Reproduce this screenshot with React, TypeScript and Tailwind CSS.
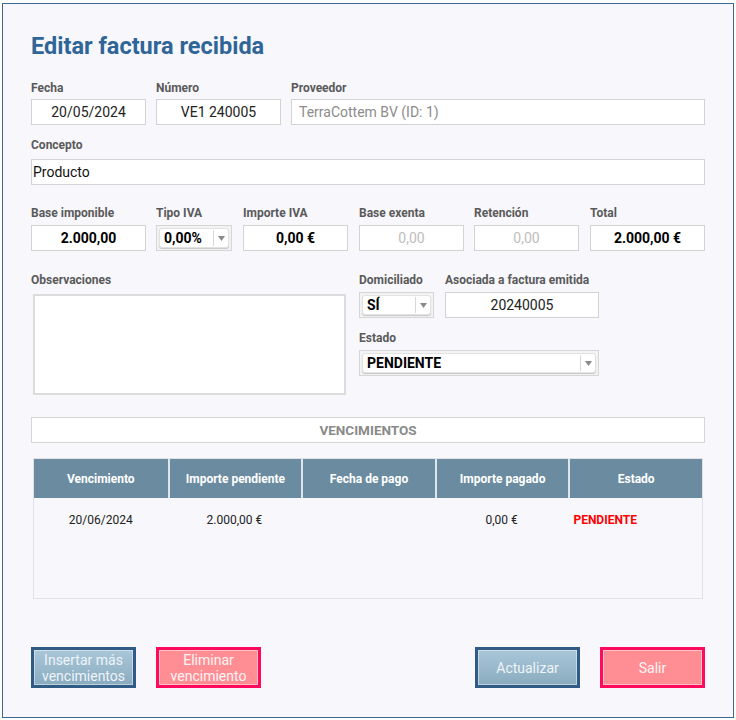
import React from "react";

const font = { fontFamily: "Roboto, 'Liberation Sans', sans-serif" };

const Label = ({ children, className = "" }: { children: React.ReactNode; className?: string }) => (
  <div className={`text-[12px] leading-[16px] font-bold text-[#5a5a5a] ${className}`}>{children}</div>
);

const Field = ({
  value,
  className = "",
  textClass = "text-center text-[#222]",
}: {
  value: string;
  className?: string;
  textClass?: string;
}) => (
  <div
    className={`h-[26px] border border-[#d3d3d3] bg-white flex items-center text-[14px] ${textClass} ${className}`}
  >
    <span className="w-full px-[7px]">{value}</span>
  </div>
);

const Select = ({ value, className = "" }: { value: string; className?: string }) => (
  <div className={`h-[26px] border border-[#d6d6d6] bg-[#f3f3f3] p-[2px] ${className}`}>
    <div className="h-full rounded-[3px] bg-white border border-[#e2e2e2] shadow-[0_1px_1px_rgba(0,0,0,0.18)] flex items-center">
      <span className="flex-1 pl-[4px] text-[14px] font-bold text-black">{value}</span>
      <div className="w-[15px] h-[16px] border-l border-[#d8d8d8] flex items-center justify-center">
        <svg width="7" height="5" viewBox="0 0 7 5">
          <path d="M0 0h7L3.5 5z" fill="#8a8a8a" />
        </svg>
      </div>
    </div>
  </div>
);

const Btn = ({ children, kind }: { children: React.ReactNode; kind: "blue" | "pink" }) =>
  kind === "blue" ? (
    <button className="w-[105px] h-[41px] border-[3px] border-[#2f5b85] bg-gradient-to-b from-[#a9c7d9] to-[#8aabbf] shadow-[inset_0_0_0_1px_rgba(255,255,255,0.45)] text-[14px] leading-[16px] text-[#eef4f8]">
      {children}
    </button>
  ) : (
    <button className="w-[105px] h-[41px] border-[3px] border-[#ff0a5c] bg-[#ff8e94] shadow-[inset_0_0_0_1px_rgba(255,255,255,0.45)] text-[14px] leading-[16px] text-[#fff4f4]">
      {children}
    </button>
  );

const cols = ["Vencimiento", "Importe pendiente", "Fecha de pago", "Importe pagado", "Estado"];

export default function App() {
  return (
    <div className="w-[736px] h-[720px] bg-white overflow-hidden" style={font}>
      <div className="ml-[2px] mt-[3px] w-[732px] h-[715px] border border-[#3c6892] bg-[#f7f7fc] pl-[28px] pr-[28px] pt-[28px]">
        <h1 className="text-[23.5px] leading-[28px] font-bold text-[#2f6597]">Editar factura recibida</h1>

        <div className="flex gap-[10px] mt-[20px]">
          <div className="w-[115px]">
            <Label className="mb-[3px]">Fecha</Label>
            <Field value="20/05/2024" />
          </div>
          <div className="w-[125px]">
            <Label className="mb-[3px]">Número</Label>
            <Field value="VE1 240005" />
          </div>
          <div className="flex-1">
            <Label className="mb-[3px]">Proveedor</Label>
            <Field value="TerraCottem BV (ID: 1)" textClass="text-left text-[#8c8c8c]" />
          </div>
        </div>

        <Label className="mt-[12px] mb-[6px]">Concepto</Label>
        <div className="h-[26px] border border-[#d3d3d3] bg-white flex items-center text-[14px] text-[#111] pl-[1px]">
          Producto
        </div>

        <div className="flex mt-[20px]">
          <div className="w-[115px]">
            <Label className="mb-[4px]">Base imponible</Label>
            <Field value="2.000,00" textClass="text-center font-bold text-black" />
          </div>
          <div className="w-[76px] ml-[10px]">
            <Label className="mb-[4px]">Tipo IVA</Label>
            <Select value="0,00%" />
          </div>
          <div className="w-[105px] ml-[11px]">
            <Label className="mb-[4px]">Importe IVA</Label>
            <Field value="0,00 €" textClass="text-center font-bold text-black" />
          </div>
          <div className="w-[105px] ml-[11px]">
            <Label className="mb-[4px]">Base exenta</Label>
            <Field value="0,00" textClass="text-center text-[#bdbdbd]" />
          </div>
          <div className="w-[105px] ml-[10px]">
            <Label className="mb-[4px]">Retención</Label>
            <Field value="0,00" textClass="text-center text-[#bdbdbd]" />
          </div>
          <div className="w-[115px] ml-[11px]">
            <Label className="mb-[4px]">Total</Label>
            <Field value="2.000,00 €" textClass="text-center font-bold text-black" />
          </div>
        </div>

        <div className="flex mt-[21px]">
          <div className="w-[315px]">
            <Label className="mb-[6px]">Observaciones</Label>
            <div className="ml-[2px] w-[313px] h-[101px] border-2 border-[#dcdcdc] bg-white" />
          </div>
          <div className="ml-[13px]">
            <div className="flex gap-[11px]">
              <div className="w-[75px]">
                <Label className="mb-[4px]">Domiciliado</Label>
                <Select value="SÍ" />
              </div>
              <div className="w-[154px]">
                <Label className="mb-[4px]">Asociada a factura emitida</Label>
                <Field value="20240005" />
              </div>
            </div>
            <Label className="mt-[12px] mb-[4px]">Estado</Label>
            <Select value="PENDIENTE" className="w-[240px]" />
          </div>
        </div>

        <div className="mt-[22px] h-[26px] border border-[#d6d6d6] bg-white flex items-center justify-center text-[13.5px] font-bold text-[#8a8a8a]">
          VENCIMIENTOS
        </div>

        <div className="mt-[15px] mx-[2px] h-[141px] border border-[#e2e2e6]">
          <div className="grid grid-cols-5 h-[39px] bg-[#6b8ca0]">
            {cols.map((c, i) => (
              <div
                key={c}
                className={`flex items-center justify-center text-[12px] font-bold text-white ${
                  i > 0 ? "border-l-2 border-[#dfe6eb]" : ""
                }`}
              >
                {c}
              </div>
            ))}
          </div>
          <div className="grid grid-cols-5 h-[44px] items-center text-[12px] text-[#222]">
            <div className="text-center">20/06/2024</div>
            <div className="text-center">2.000,00 €</div>
            <div />
            <div className="text-center">0,00 €</div>
            <div className="pl-[5px] font-bold text-[#ff0000]">PENDIENTE</div>
          </div>
        </div>

        <div className="flex mt-[48px]">
          <Btn kind="blue">
            Insertar más
            <br />
            vencimientos
          </Btn>
          <div className="ml-[20px]">
            <Btn kind="pink">
              Eliminar
              <br />
              vencimiento
            </Btn>
          </div>
          <div className="ml-auto flex gap-[20px]">
            <Btn kind="blue">Actualizar</Btn>
            <Btn kind="pink">Salir</Btn>
          </div>
        </div>
      </div>
    </div>
  );
}
